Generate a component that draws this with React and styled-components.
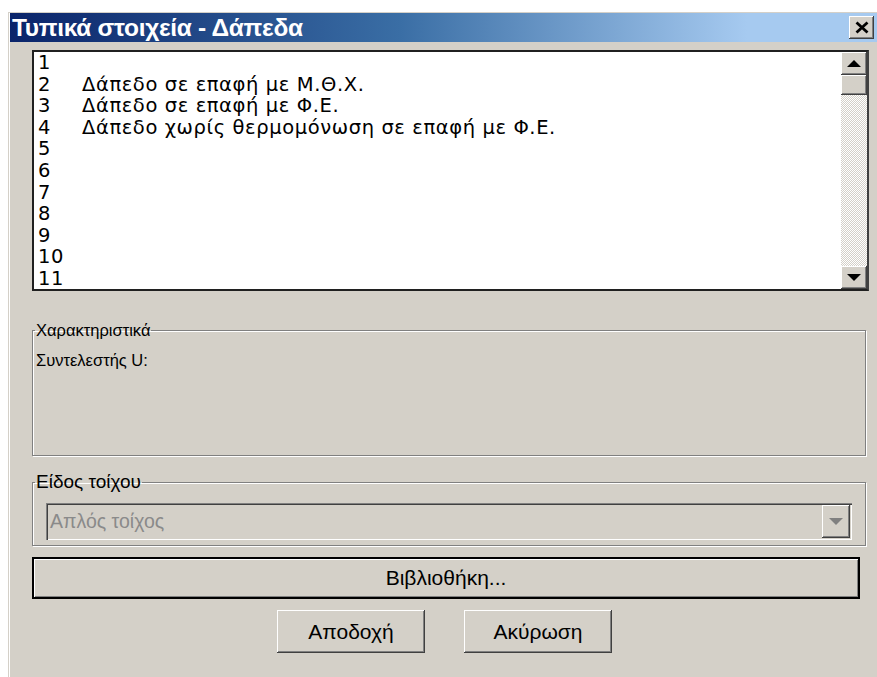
import styled, { createGlobalStyle } from "styled-components"

const GlobalStyle = createGlobalStyle`
  html, body {
    margin: 0;
    background: #ffffff;
    overflow: hidden;
  }
`

const rows = [
  { n: 1, text: "" },
  { n: 2, text: "Δάπεδο σε επαφή με Μ.Θ.Χ." },
  { n: 3, text: "Δάπεδο σε επαφή με Φ.Ε." },
  { n: 4, text: "Δάπεδο χωρίς θερμομόνωση σε επαφή με Φ.Ε." },
  { n: 5, text: "" },
  { n: 6, text: "" },
  { n: 7, text: "" },
  { n: 8, text: "" },
  { n: 9, text: "" },
  { n: 10, text: "" },
  { n: 11, text: "" },
]

function Arrow({ down, color = "#000" }) {
  return (
    <svg width="14" height="8" viewBox="0 0 14 8">
      {down
        ? <polygon points="0,0 14,0 7,7" fill={color} />
        : <polygon points="0,7 14,7 7,0" fill={color} />}
    </svg>
  )
}

function App() {
  return (
    <Page>
      <GlobalStyle />
      <Dialog>
        <TitleBar>
          <Title>Τυπικά στοιχεία - Δάπεδα</Title>
          <CloseButton>
            <svg width="14" height="13" viewBox="0 0 14 13">
              <path d="M1.5 1.5 L12.5 11.5 M12.5 1.5 L1.5 11.5" stroke="#000" strokeWidth="2.8" />
            </svg>
          </CloseButton>
        </TitleBar>

        <Body>
          <ListBox>
            <ListRows>
              {rows.map((r) => (
                <ListRow key={r.n}>
                  <RowNum>{r.n}</RowNum>
                  <span>{r.text}</span>
                </ListRow>
              ))}
            </ListRows>
            <ScrollBar>
              <ScrollButton><Arrow /></ScrollButton>
              <Thumb />
              <Track />
              <ScrollButton><Arrow down /></ScrollButton>
            </ScrollBar>
          </ListBox>

          <GroupBox $height={135} $top={30}>
            <Legend $size={16.5}>Χαρακτηριστικά</Legend>
            <FieldLabel>Συντελεστής U:</FieldLabel>
          </GroupBox>

          <GroupBox $height={75} $top={15}>
            <Legend $size={19}>Είδος τοίχου</Legend>
            <Combo>
              <ComboText>Απλός τοίχος</ComboText>
              <ComboButton><Arrow down color="#808080" /></ComboButton>
            </Combo>
          </GroupBox>

          <WideButton>Βιβλιοθήκη...</WideButton>

          <ButtonRow>
            <PushButton>Αποδοχή</PushButton>
            <PushButton>Ακύρωση</PushButton>
          </ButtonRow>
        </Body>
      </Dialog>
    </Page>
  )
}

export default App

const Page = styled.div`
  padding: 12px 0 0 8px;
  height: 665px;
  font-family: "Liberation Sans", Arial, sans-serif;
`

const Dialog = styled.div`
  width: 880px;
  height: 665px;
  background: #d4d0c8;
  box-shadow: inset 1px 1px 0 #d4d0c8, inset 2px 2px 0 #ffffff;
  padding: 1px 0 0 2px;
  box-sizing: border-box;
`

const TitleBar = styled.div`
  height: 29px;
  display: flex;
  align-items: center;
  justify-content: space-between;
  padding: 0 3px 0 2px;
  background: linear-gradient(to right, #0a246a 0%, #3a6ea5 45%, #a6caf0 85%);
  width: 867px;
  box-sizing: border-box;
`

const Title = styled.div`
  color: #ffffff;
  font-weight: bold;
  font-size: 24.5px;
  letter-spacing: -0.3px;
`

const CloseButton = styled.div`
  width: 25px;
  height: 23px;
  display: flex;
  align-items: center;
  justify-content: center;
  background: #d4d0c8;
  box-shadow: inset -1px -1px 0 #404040, inset 1px 1px 0 #ffffff,
    inset -2px -2px 0 #808080;
`

const Body = styled.div`
  padding: 8px 0 0 22px;
  display: flex;
  flex-direction: column;
  width: 859px;
  box-sizing: border-box;
`

const ListBox = styled.div`
  height: 241px;
  display: flex;
  background: #ffffff;
  border: 2px solid #202020;
  border-right-color: #404040;
  box-sizing: border-box;
`

const ListRows = styled.div`
  flex: 1;
  padding: 0 0 0 4px;
`

const ListRow = styled.div`
  display: flex;
  height: 21.6px;
  line-height: 21.6px;
  font-family: "DejaVu Sans", "Liberation Sans", sans-serif;
  font-size: 19.5px;
  letter-spacing: 0.6px;
  color: #000;
  white-space: nowrap;
`

const RowNum = styled.span`
  width: 44px;
`

const ScrollBar = styled.div`
  width: 26px;
  display: flex;
  flex-direction: column;
`

const ScrollButton = styled.div`
  height: 23px;
  display: flex;
  align-items: center;
  justify-content: center;
  background: #d4d0c8;
  box-shadow: inset -1px -1px 0 #404040, inset 1px 1px 0 #ffffff,
    inset -2px -2px 0 #808080;
`

const Thumb = styled(ScrollButton)`
  height: 20px;
`

const Track = styled.div`
  flex: 1;
  background-color: #ffffff;
  background-image: repeating-conic-gradient(#d4d0c8 0 25%, #ffffff 0 50%);
  background-size: 2px 2px;
`

const GroupBox = styled.fieldset`
  margin: ${(p) => p.$top}px 3px 0 0;
  padding: 4px 4px 0 3px;
  height: ${(p) => p.$height}px;
  box-sizing: border-box;
  border: 1px solid #808080;
  box-shadow: 1px 1px 0 #ffffff, inset 1px 1px 0 #ffffff;
  min-width: 0;
`

const Legend = styled.legend`
  font-size: ${(p) => p.$size}px;
  color: #000;
  padding: 0 1px;
  margin-left: -1px;
`

const FieldLabel = styled.div`
  font-size: 16.5px;
  color: #000;
  margin-top: 7px;
`

const Combo = styled.div`
  margin: 6px 9px 0 10px;
  height: 37px;
  display: flex;
  align-items: stretch;
  box-sizing: border-box;
  padding: 2px;
  box-shadow: inset 1px 1px 0 #808080, inset 2px 2px 0 #404040,
    inset -1px -1px 0 #ffffff, inset -2px -2px 0 #d4d0c8;
`

const ComboText = styled.div`
  flex: 1;
  display: flex;
  align-items: center;
  padding-left: 2px;
  font-size: 19.5px;
  color: #8a8a8a;
`

const ComboButton = styled(ScrollButton)`
  width: 28px;
  height: auto;
`

const WideButton = styled.div`
  margin-top: 11px;
  margin-right: 9px;
  height: 42px;
  display: flex;
  align-items: center;
  justify-content: center;
  font-size: 21px;
  background: #d4d0c8;
  border: 2px solid #000;
  box-sizing: border-box;
  box-shadow: inset 1px 1px 0 #ffffff, inset -1px -1px 0 #808080;
`

const ButtonRow = styled.div`
  margin-top: 11px;
  display: flex;
  justify-content: center;
  gap: 39px;
  padding-right: 12px;
`

const PushButton = styled.div`
  width: 148px;
  height: 43px;
  display: flex;
  align-items: center;
  justify-content: center;
  font-size: 21px;
  background: #d4d0c8;
  box-shadow: inset -1px -1px 0 #404040, inset 1px 1px 0 #ffffff,
    inset -2px -2px 0 #808080;
`
